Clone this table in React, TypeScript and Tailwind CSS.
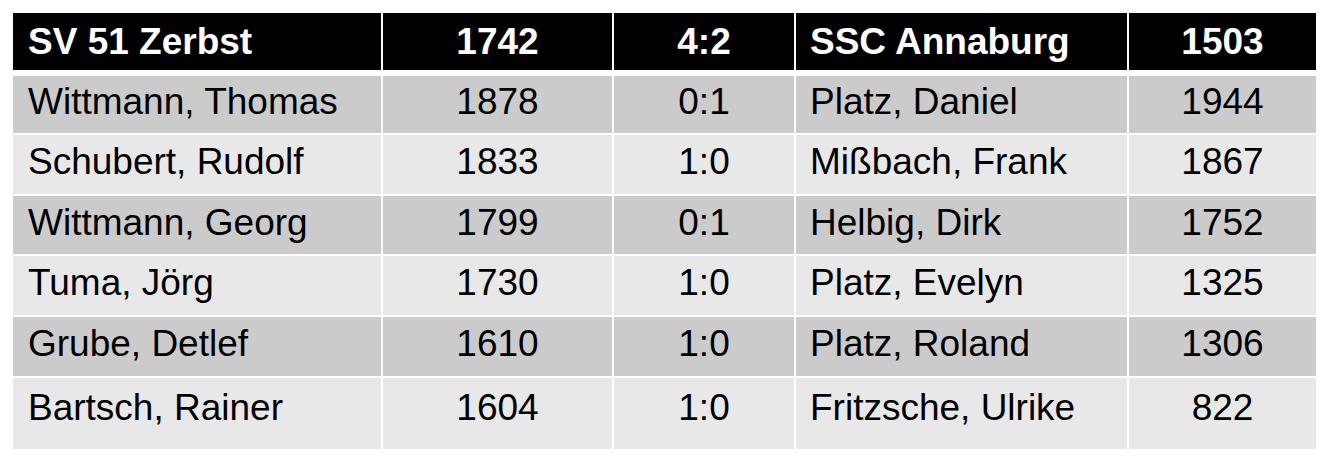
const header = ["SV 51 Zerbst", "1742", "4:2", "SSC Annaburg", "1503"];

const rows = [
  { cells: ["Wittmann, Thomas", "1878", "0:1", "Platz, Daniel", "1944"], h: "h-[57px]", bg: "bg-[#cbcbcb]", pb: "pb-[6px]" },
  { cells: ["Schubert, Rudolf", "1833", "1:0", "Mißbach, Frank", "1867"], h: "h-[59px]", bg: "bg-[#e8e8e8]", pb: "pb-[6px]" },
  { cells: ["Wittmann, Georg", "1799", "0:1", "Helbig, Dirk", "1752"], h: "h-[58px]", bg: "bg-[#cbcbcb]", pb: "pb-[6px]" },
  { cells: ["Tuma, Jörg", "1730", "1:0", "Platz, Evelyn", "1325"], h: "h-[59px]", bg: "bg-[#e8e8e8]", pb: "pb-[6px]" },
  { cells: ["Grube, Detlef", "1610", "1:0", "Platz, Roland", "1306"], h: "h-[59px]", bg: "bg-[#cbcbcb]", pb: "pb-[6px]" },
  { cells: ["Bartsch, Rainer", "1604", "1:0", "Fritzsche, Ulrike", "822"], h: "h-[71px]", bg: "bg-[#e8e8e8]", pb: "pb-[12px]" },
];

// left-aligned name columns, centered number columns
const align = ["justify-start pl-[15px]", "justify-center", "justify-center", "justify-start pl-[14px]", "justify-center"];

const grid = "grid grid-cols-[368px_229px_180px_331px_187px] gap-x-[2px]";

export default function App() {
  return (
    <div
      className="min-h-screen w-[1329px] bg-white pl-[13px] pt-[13px]"
      style={{ fontFamily: '"Liberation Sans", Arial, sans-serif' }}
    >
      <div className={`${grid} mb-[6px] h-[57px]`}>
        {header.map((t, i) => (
          <div key={i} className={`flex items-center bg-black text-[37px] font-bold leading-none text-white ${align[i]}`}>
            {t}
          </div>
        ))}
      </div>

      <div className="flex flex-col gap-y-[2px]">
        {rows.map((r, ri) => (
          <div key={ri} className={`${grid} ${r.h}`}>
            {r.cells.map((t, i) => (
              <div
                key={i}
                className={`flex items-center text-[37px] leading-none text-black ${r.bg} ${r.pb} ${align[i]}`}
              >
                {t}
              </div>
            ))}
          </div>
        ))}
      </div>
    </div>
  );
}
